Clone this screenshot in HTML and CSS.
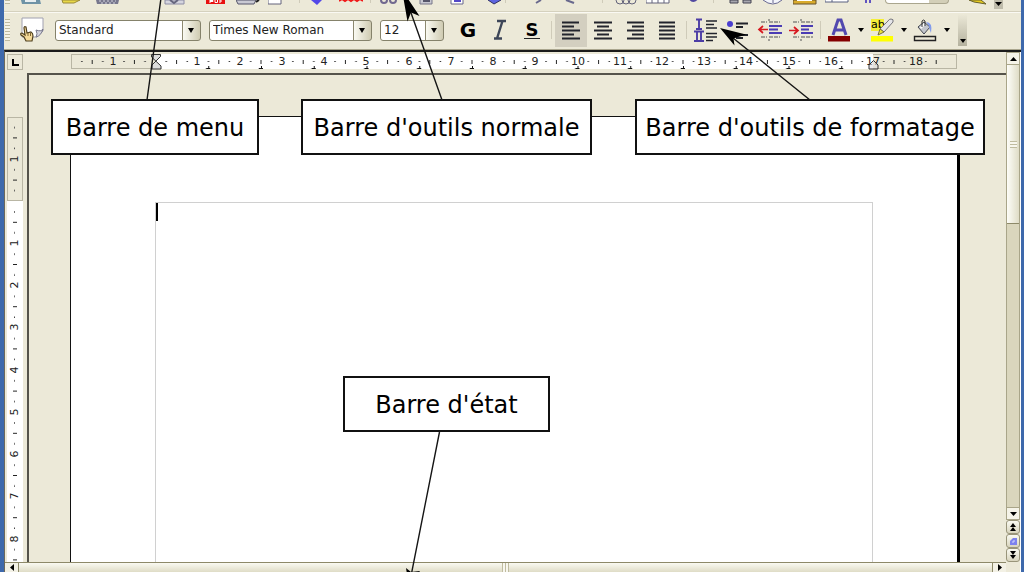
FILE: index.html
```
<!DOCTYPE html>
<html lang="fr">
<head>
<meta charset="utf-8">
<title>Traitement de texte</title>
<link rel="stylesheet" href="styles.css">
</head>
<body>
<div class="window">

  <div class="toolbar toolbar-standard" role="toolbar" aria-label="Barre d'outils normale">
    <span class="grip"></span>
    <button class="tool" aria-label="Nouveau"><svg width="24" height="5"><path d="M2 0H21L22 4H3Z" fill="#6f93a6"/><path d="M6 0h11v2H6z" fill="#e8eef0"/></svg></button>
    <span class="space-9"></span>
    <button class="tool" aria-label="Ouvrir"><svg width="24" height="5"><path d="M2 0H20L14 3H3Z" fill="#e8d848" stroke="#9a8a3a"/></svg></button>
    <span class="space-4"></span>
    <button class="tool" aria-label="Enregistrer"><svg width="24" height="5"><path d="M0 0H23L22 4H1Z" fill="#77778d"/><path d="M3 1h17M5 3h14" stroke="#d5d5df" stroke-dasharray="2 2"/></svg></button>
    <span class="space-36"></span>
    <button class="tool" aria-label="Modifier"><svg width="24" height="5"><path d="M1 0H20V4H1Z" fill="#d5d5df" stroke="#8c8ca4"/><path d="M6 0l4 3 4-3" fill="none" stroke="#66667e" stroke-width="2"/></svg></button>
    <span class="space-8"></span>
    <button class="tool" aria-label="Exporter en PDF"><svg width="24" height="5"><path d="M2 0H21V4H2Z" fill="#e81010"/><path d="M6 0v3M6 .5h3v1H6M11 0v2.500h2.500V0M16 0v3M16 1h2" fill="none" stroke="#fff"/></svg></button>
    <button class="tool" aria-label="Imprimer"><svg width="24" height="5"><path d="M0 0H20L18 4H2Z" fill="#c9c9d3" stroke="#55556a"/><path d="M20 2l3-2" stroke="#222" stroke-width="2"/></svg></button>
    <button class="tool" aria-label="Aperçu"><svg width="24" height="5"><path d="M0 -1H13V4H0Z" fill="#fff" stroke="#62627a"/></svg></button>
    <span class="separator"></span>
    <button class="tool" aria-label="Orthographe"><svg width="24" height="5"><path d="M4 0H15L10 5Z" fill="#5348e8"/></svg></button>
    <button class="tool" aria-label="Vérification automatique"><svg width="24" height="5"><path d="M0 1l3-2 3 2 3-2 3 2 3-2 3 2 3-2 3 2" fill="none" stroke="#f01818" stroke-width="2"/></svg></button>
    <span class="separator"></span>
    <button class="tool" aria-label="Couper"><svg width="24" height="5"><circle cx="6" cy="0" r="3" fill="none" stroke="#71688f" stroke-width="2"/><circle cx="15" cy="0" r="3" fill="none" stroke="#71688f" stroke-width="2"/></svg></button>
    <button class="tool" aria-label="Copier"><svg width="24" height="5"><path d="M10 -1H22V4H10Z" fill="#c8c8d2" stroke="#777789"/><path d="M13 1h7" stroke="#55556a" stroke-width="2"/></svg></button>
    <button class="tool" aria-label="Coller"><svg width="24" height="5"><path d="M9 -1H21V4H9Z" fill="#fff" stroke="#66668b"/><path d="M12 1h7" stroke="#5348c8" stroke-width="2"/></svg></button>
    <button class="tool" aria-label="Pinceau"><svg class="spill" width="24" height="5"><path d="M14 0l6 4 7-4" fill="#5d64e0" stroke="#303060"/></svg></button>
    <span class="separator"></span>
    <span class="space-13"></span>
    <button class="tool" aria-label="Annuler"><svg width="24" height="5"><path d="M15 0l-5 3" stroke="#68688d" stroke-width="2"/></svg></button>
    <button class="tool" aria-label="Rétablir"><svg width="24" height="5"><path d="M8 0l8 3" stroke="#68688d" stroke-width="2"/></svg></button>
    <span class="space-13"></span>
    <span class="separator"></span>
    <span class="space-4"></span>
    <button class="tool" aria-label="Hyperlien"><svg width="24" height="5"><g fill="none" stroke="#62627a"><circle cx="6" cy="0" r="4"/><circle cx="12" cy="0" r="4"/><circle cx="18" cy="0" r="4"/></g></svg></button>
    <button class="tool" aria-label="Tableau"><svg width="24" height="5"><path d="M0 -1H23V3H0ZM6 0v3M12 0v3M18 0v3" fill="#fff" stroke="#62627a"/></svg></button>
    <button class="tool" aria-label="Dessin"><svg width="24" height="5"><path d="M12 -1q3 4 7 0" fill="#fff" stroke="#5048a0" stroke-width="2"/></svg></button>
    <span class="space-4"></span>
    <span class="separator"></span>
    <span class="space-8"></span>
    <button class="tool" aria-label="Rechercher"><svg width="24" height="5"><path d="M1 0H9V3H1ZM14 0H22V3H14Z" fill="#a7a7af" stroke="#444452"/></svg></button>
    <button class="tool" aria-label="Navigateur"><svg width="24" height="5"><path d="M2 0Q12 8 21 0" fill="#f3f5fa" stroke="#686890"/><path d="M12 0v3" stroke="#686890"/></svg></button>
    <button class="tool" aria-label="Galerie"><svg width="24" height="5"><path d="M0 0H23V4H0Z" fill="#d9ab2c" stroke="#66522c"/><path d="M4 0h15v1H4z" fill="#fff"/></svg></button>
    <button class="tool" aria-label="Sources de données"><svg width="24" height="5"><path d="M0 -1H23V2H0ZM7 0v2" fill="#fff" stroke="#596080"/></svg></button>
    <button class="tool" aria-label="Caractères non imprimables"><svg width="24" height="5"><path d="M9 0v3M13 0v3" stroke="#6054c0" stroke-width="2"/></svg></button>
    <span class="zoom-field"></span>
    <span class="space-13"></span>
    <button class="tool" aria-label="Aide"><svg width="24" height="5"><path d="M3 0H15L20 4L8 2Z" fill="#e8cc20" stroke="#66602c"/></svg></button>
    <button class="overflow" aria-label="Plus d'outils"><svg width="7" height="4"><path d="M0 0H7L3.500 4Z"/></svg></button>
  </div>

  <div class="toolbar toolbar-format" role="toolbar" aria-label="Barre d'outils de formatage">
    <span class="grip"></span>
    <button class="style-button" aria-label="Styles et formatage"><svg width="26" height="26" viewBox="0 0 26 26"><path d="M3 1H24V14L18 20H3Z" fill="#fff" stroke="#a0a0b0"/><path d="M24 12Q22 15 17 13Q19 17 17 20Q22 19 24 12Z" fill="#d4d4dd" stroke="#77778b"/><path d="M5 11Q5 9 7 10L8 16L12 15Q14 16 14 19L13 24H7L5 20L2 18Q1 16 3 16L6 18Z" fill="#f4d998" stroke="#4f4020" stroke-width="1.200"/><path d="M9 16v3M11.500 16v3" stroke="#7e6430"/></svg></button>
    <label class="combo combo-style"><select aria-label="Style"><option>Standard</option></select><svg width="6" height="5"><path d="M0 0H6L3 5Z"/></svg></label>
    <label class="combo combo-font"><select aria-label="Police"><option>Times New Roman</option></select><svg width="6" height="5"><path d="M0 0H6L3 5Z"/></svg></label>
    <label class="combo combo-size"><select aria-label="Taille"><option>12</option></select><svg width="6" height="5"><path d="M0 0H6L3 5Z"/></svg></label>
    <button class="tool bold">G</button>
    <button class="tool italic" aria-label="Italique"><svg width="24" height="26" viewBox="0 0 24 26"><path d="M9 4H18M6 21.500H14M14.500 4L9 21.500" fill="none" stroke="#3d4658" stroke-width="2.400"/></svg></button>
    <button class="tool underline"><span>S</span></button>
    <span class="separator"></span>
    <button class="tool active" aria-label="Aligner à gauche"><svg width="24" height="26" viewBox="0 0 24 26"><path d="M3 5.500h17M3 9.500h12M3 13.500h18M3 17.500h12M3 21.500h18" stroke="#22242c" stroke-width="2"/></svg></button>
    <button class="tool" aria-label="Centrer"><svg width="24" height="26" viewBox="0 0 24 26"><path d="M3 5.500h18M6 9.500h12M3 13.500h18M6 17.500h12M3 21.500h18" stroke="#22242c" stroke-width="2"/></svg></button>
    <button class="tool" aria-label="Aligner à droite"><svg width="24" height="26" viewBox="0 0 24 26"><path d="M4 5.500h17M9 9.500h12M4 13.500h17M9 17.500h12M4 21.500h17" stroke="#22242c" stroke-width="2"/></svg></button>
    <button class="tool" aria-label="Justifier"><svg width="24" height="26" viewBox="0 0 24 26"><path d="M4 5.500h16M4 9.500h16M4 13.500h16M4 17.500h16M4 21.500h16" stroke="#22242c" stroke-width="2"/></svg></button>
    <span class="separator"></span>
    <button class="tool" aria-label="Numérotation"><svg width="24" height="26" viewBox="0 0 24 26"><path d="M2 2.500h6M5 2v10M2 12h6M0 14.500h10M3 14v10M7 14v10M0 24h10" stroke="#4c3da5" stroke-width="1.900"/><path d="M12 4h11M12 7.500h8M12 11h11M12 16.500h11M12 20h11M12 23.500h7" stroke="#22242c" stroke-width="1.700"/></svg></button>
    <button class="tool" aria-label="Puces"><svg width="24" height="26" viewBox="0 0 24 26"><circle cx="4" cy="7" r="3" fill="#4a3ed0"/><path d="M10 6.500h12M10 10h7M10 18h12M10 21h7" stroke="#22242c" stroke-width="1.800"/></svg></button>
    <button class="tool" aria-label="Diminuer le retrait"><svg width="26" height="26" viewBox="0 0 26 26"><path d="M4 5h6M12 5h11M4 20h6M12 20h11M12 2v2M12 22v2" stroke="#858580" stroke-dasharray="4 1" stroke-width="1.500"/><path d="M12 9h13M12 12.500h9M12 16h13" stroke="#4b3cb4" stroke-width="2"/><path d="M11 12.500H2M6 9L2 12.500L6 16" fill="none" stroke="#d71920" stroke-width="1.700"/></svg></button>
    <button class="tool" aria-label="Augmenter le retrait"><svg width="26" height="26" viewBox="0 0 26 26"><path d="M4 5h6M12 5h12M4 20h6M12 20h12M12 2v2M12 22v2" stroke="#858580" stroke-dasharray="4 1" stroke-width="1.500"/><path d="M12 9h12M12 12.500h8M12 16h12" stroke="#4b3cb4" stroke-width="2"/><path d="M0 13.500H9M5 10L9 13.500L5 17" fill="none" stroke="#d71920" stroke-width="1.700"/></svg></button>
    <span class="separator narrow"></span>
    <button class="tool" aria-label="Couleur de police"><svg width="24" height="26" viewBox="0 0 24 26"><path d="M6 18L11 3H14L19 18M8.500 13H16.500" fill="none" stroke="#5249af" stroke-width="3"/><path d="M1 19h22v5.500H1z" fill="#850000"/></svg></button>
    <button class="drop" aria-label="Choisir la couleur de police"><svg width="6" height="4"><path d="M0 0H6L3 4Z"/></svg></button>
    <button class="tool" aria-label="Surlignage"><svg width="24" height="26" viewBox="0 0 24 26"><path d="M1 2h13v12H1z" fill="#f4ee38"/><text x="1" y="11" class="icon-text">ab</text><path d="M21 2Q24 2 23 5L14 15L10 12L18 4Q19 2 21 2Z" fill="#e5e5e8" stroke="#77777d"/><path d="M10 12l4 3-6 3z" fill="#eee33a" stroke="#77733a"/><path d="M1 19h22v5.500H1z" fill="#ffff00"/></svg></button>
    <button class="drop" aria-label="Choisir le surlignage"><svg width="6" height="4"><path d="M0 0H6L3 4Z"/></svg></button>
    <button class="tool" aria-label="Arrière-plan"><svg width="24" height="26" viewBox="0 0 24 26"><path d="M5 10L11 5L17 10L11 17Z" fill="#c3c6cd" stroke="#444852"/><path d="M7 10L11 6L12 8L8 12Z" fill="#fff"/><path d="M9 10V4Q10.500 2 12 4V9" fill="none" stroke="#333"/><path d="M13 5Q20 5 18 16Q16 12 16 9Z" fill="#829cec"/><path d="M1.500 19.500h21v4h-21z" fill="#ece9d8" stroke="#222" stroke-width="1.400"/></svg></button>
    <button class="drop" aria-label="Choisir l'arrière-plan"><svg width="6" height="4"><path d="M0 0H6L3 4Z"/></svg></button>
    <button class="overflow tall" aria-label="Plus d'options"><svg width="6" height="4"><path d="M0 0H6L3 4Z"/></svg></button>
  </div>

  <div class="workspace">
    <div class="editor">
      <div class="ruler-row">
        <button class="tab-type" aria-label="Type de tabulation"><svg width="7" height="7"><path d="M1 0V6H7" fill="none" stroke="#000" stroke-width="2"/></svg></button>
        <svg class="ruler" height="18" aria-label="Règle horizontale">
          <defs><pattern id="marks" x="84.500" width="42.200" height="18" patternUnits="userSpaceOnUse"><path d="M10 8.500h1.500M31 8.500h1.500" stroke="#333"/><path d="M21.100 7v4" stroke="#222"/></pattern>
          <pattern id="tabs" x="84.500" width="52.750" height="18" patternUnits="userSpaceOnUse"><path d="M50.500 15.500h4.500M0 15.500h2M.5 13v3" stroke="#111"/></pattern></defs>
          <rect x=".5" y="1.500" width="885" height="14" fill="#ebe8d7" stroke="#b9b6a4"/>
          <rect x="85" y="1" width="717" height="15" fill="#fff"/>
          <rect x="8" width="866" height="18" fill="url(#marks)"/>
          <rect x="100" width="690" height="18" fill="url(#tabs)"/>
          <g class="ruler-text"><text x="42" y="12">1</text><text x="126" y="12">1</text><text x="169" y="12">2</text><text x="211" y="12">3</text><text x="253" y="12">4</text><text x="295" y="12">5</text><text x="338" y="12">6</text><text x="380" y="12">7</text><text x="422" y="12">8</text><text x="464" y="12">9</text><text x="507" y="12">10</text><text x="549" y="12">11</text><text x="591" y="12">12</text><text x="633" y="12">13</text><text x="675" y="12">14</text><text x="718" y="12">15</text><text x="760" y="12">16</text><text x="802" y="12">17</text><text x="845" y="12">18</text></g>
          <path d="M80.500 1.500h9v2L81 12v4h9v-3L80.500 4Z" fill="#ddd" stroke="#333"/>
          <path d="M798 16v-4l4.500-4.500L807 12v4Z" fill="#ddd" fill-opacity=".6" stroke="#333"/>
        </svg>
      </div>
      <div class="editor-body">
        <svg class="side-ruler" width="16" aria-label="Règle verticale">
          <defs><pattern id="side-marks" y="84.200" width="16" height="42.200" patternUnits="userSpaceOnUse"><path d="M7.500 10v1.500M7.500 31v1.500" stroke="#444"/><path d="M6 21.100h4" stroke="#222"/></pattern></defs>
          <rect width="16" height="84" fill="#ebe8d7"/><rect y="84" width="16" height="100%" fill="#fff"/>
          <rect x=".5" y=".5" width="15" height="83" fill="none" stroke="#b9b6a4"/>
          <rect y="6" width="16" height="100%" fill="url(#side-marks)"/>
          <g class="ruler-text"><text transform="translate(11 42) rotate(-90)">1</text><text transform="translate(11 126) rotate(-90)">1</text><text transform="translate(11 168) rotate(-90)">2</text><text transform="translate(11 210) rotate(-90)">3</text><text transform="translate(11 253) rotate(-90)">4</text><text transform="translate(11 295) rotate(-90)">5</text><text transform="translate(11 337) rotate(-90)">6</text><text transform="translate(11 379) rotate(-90)">7</text><text transform="translate(11 422) rotate(-90)">8</text></g>
        </svg>
        <main class="canvas">
          <div class="page"><div class="text-area"><span class="caret"></span></div></div>
        </main>
      </div>
      <div class="h-scroll">
        <button class="h-arrow" aria-label="Défiler à gauche"><svg width="4" height="7"><path d="M4 0V7L0 3.500Z"/></svg></button>
        <div class="h-thumb"><span class="h-grip"></span></div>
        <button class="h-arrow" aria-label="Défiler à droite"><svg width="4" height="7"><path d="M0 0V7L4 3.500Z"/></svg></button>
      </div>
    </div>
    <div class="v-scroll">
      <button class="v-arrow" aria-label="Défiler vers le haut"><svg width="7" height="4"><path d="M0 4H7L3.500 0Z"/></svg></button>
      <div class="v-track"><div class="v-thumb"><span class="v-grip"></span></div></div>
      <button class="v-arrow" aria-label="Défiler vers le bas"><svg width="7" height="4"><path d="M0 0H7L3.500 4Z"/></svg></button>
      <button class="v-nav" aria-label="Page précédente"><svg width="6" height="8"><path d="M0 4H6L3 0ZM0 8H6L3 4Z"/></svg></button>
      <button class="v-nav" aria-label="Navigation"><svg width="7" height="7"><path d="M0 7V3L3 0H7V7Z" fill="#7d82ee"/><path d="M3 5V3H5" fill="none" stroke="#d5d8ff"/></svg></button>
      <button class="v-nav" aria-label="Page suivante"><svg width="6" height="8"><path d="M0 0H6L3 4ZM0 4H6L3 8Z"/></svg></button>
    </div>
  </div>

  <div class="callout callout-menu">Barre de menu</div>
  <div class="callout callout-standard">Barre d'outils normale</div>
  <div class="callout callout-format">Barre d'outils de formatage</div>
  <div class="callout callout-status">Barre d'état</div>
  <svg class="arrows" aria-hidden="true">
    <path d="M161 -2L147 100M410 10L442 100M733 38L810 100M439.500 432L411 576" fill="none" stroke="#151515" stroke-width="1.400"/>
    <path d="M402 -10L407.500 21.500L411 12.500L419.500 16ZM720 28L734.500 45.500L733.500 38.500L746 34.500ZM406 568L411 572L420 571L409 586Z"/>
  </svg>
</div>
</body>
</html>
```

FILE: styles.css
```
* { box-sizing: border-box; }

body {
  margin: 0;
  font-family: "DejaVu Sans", sans-serif;
  color: #111;
}

button {
  display: flex;
  align-items: center;
  justify-content: center;
  flex: none;
  margin: 0;
  padding: 0;
  border: 0;
  background: none;
  color: #000;
  font: inherit;
}

svg { display: block; flex: none; }
.spill { overflow: visible; }

.window {
  position: relative;
  display: flex;
  flex-direction: column;
  height: 100vh;
  overflow: hidden;
  background: #ece9d8;
  border-left: 4px solid #3e69ac;
  border-right: 3px solid #3e69ac;
}

.toolbar { display: flex; flex: none; align-items: center; }

.toolbar-standard {
  height: 12px;
  align-items: flex-start;
  border-bottom: 1px solid #d5d1be;
}

.toolbar-format {
  height: 38px;
  padding-bottom: 2px;
  border-top: 1px solid #faf9f3;
  border-bottom: 1px solid #aaa68e;
}

.grip {
  width: 5px;
  height: 22px;
  margin: 0 5px 0 1px;
  background: repeating-linear-gradient(#bdb99f 0 1px, #f5f3e8 1px 3px);
}

.toolbar-standard .grip { height: 4px; }

.tool { width: 32px; height: 33px; }
.toolbar-standard .tool { height: 5px; }
.tool.active { background: #d3cfc0; }

.space-4 { flex: none; width: 4px; }
.space-8 { flex: none; width: 8px; }
.space-9 { flex: none; width: 9px; }
.space-13 { flex: none; width: 13px; }
.space-36 { flex: none; width: 36px; }

.separator {
  flex: none;
  width: 1px;
  height: 18px;
  margin: 0 3px;
  background: #cfcbb9;
}

.toolbar-standard .separator { height: 3px; }
.separator.narrow { margin: 0 2px; }

.zoom-field {
  width: 64px;
  height: 4px;
  border: 1px solid #aaa68e;
  border-top: 0;
  border-radius: 0 0 4px 4px;
  background: linear-gradient(90deg, #fff 70%, #d3cfb8 70%);
}

.style-button { width: 26px; height: 26px; margin-right: 10px; margin-left: 4px; }

.combo {
  position: relative;
  display: flex;
  align-items: center;
  flex: none;
  height: 21px;
  margin-right: 8px;
}

.combo select {
  appearance: none;
  width: 100%;
  height: 100%;
  padding: 0 20px 0 3px;
  border: 1px solid #85826b;
  border-radius: 3px;
  background: linear-gradient(90deg, #8d8970 1px, #fafaf2 1px, #cfcbb2) right / 18px 100% no-repeat #fff;
  color: #222;
  font: 12px "DejaVu Sans", sans-serif;
}

.combo svg { position: absolute; right: 7px; pointer-events: none; }
.combo-style { width: 146px; }
.combo-font { width: 163px; }
.combo-size { width: 64px; }

.bold { font-size: 20px; font-weight: bold; }
.underline { font-size: 18px; font-weight: bold; line-height: 17px; }
.underline span { width: 16px; border-bottom: 1px solid #222; }
.icon-text { font: 11px "DejaVu Sans", sans-serif; }

.drop { width: 11px; height: 33px; }

.overflow {
  align-items: flex-end;
  width: 9px;
  height: 9px;
  padding-bottom: 3px;
  background: #bfbcab;
}

.overflow.tall {
  height: 32px;
  margin-left: 6px;
  background: linear-gradient(#ece9d8, #b5b29f);
}

.workspace {
  display: flex;
  flex: 1;
  min-height: 0;
  border-top: 2px solid #1b1b1b;
  border-left: 1px solid #6c695c;
}

.editor { display: flex; flex: 1; flex-direction: column; min-width: 0; }

.ruler-row { display: flex; flex: none; gap: 48px; height: 21px; padding: 1px 0 0 2px; }

.tab-type {
  width: 16px;
  height: 16px;
  margin-top: 1px;
  border: 1px solid #b9b6a4;
}

.ruler { flex: 1; min-width: 0; }
.ruler-text { fill: #222; font: 11px "DejaVu Sans", sans-serif; text-anchor: middle; }

.editor-body { display: flex; flex: 1; gap: 4px; min-height: 0; padding-left: 2px; }
.side-ruler { height: auto; margin-top: 44px; }

.canvas {
  display: flex;
  flex: 1;
  min-width: 0;
  padding: 41px 46px 0 41px;
  border-top: 2px solid #55534b;
  border-left: 2px solid #55534b;
}

.page {
  display: flex;
  flex: 1;
  padding: 85px 84px 0;
  border: 1px solid #111;
  border-right: 3px solid #000;
  border-bottom: 0;
  background: #fff;
}

.text-area { flex: 1; border: 1px solid #d0d0d0; border-bottom: 0; }
.caret { display: block; width: 2px; height: 18px; background: #000; }

.h-scroll { display: flex; flex: none; height: 10px; overflow: hidden; border-top: 1px solid #8d8969; }
.h-arrow { width: 13px; background: #f3f1e5; }
.h-thumb {
  display: flex;
  flex: 1;
  justify-content: center;
  border-right: 1px solid #8d8969;
  border-left: 1px solid #8d8969;
  background: linear-gradient(#fafaf2, #dfdcc6);
}
.h-grip { width: 7px; background: repeating-linear-gradient(90deg, #c0bca0 0 1px, #f8f7ef 1px 3px); }

.v-scroll {
  display: flex;
  flex: none;
  flex-direction: column;
  width: 15px;
  padding-bottom: 10px;
  border-right: 1px solid #fff;
}

.v-arrow { height: 13px; border: 1px solid #a9a589; background: #f5f3e8; }
.v-track { flex: 1; border: 1px solid #a9a589; border-width: 0 1px; background: #dad6bd; }
.v-thumb {
  display: flex;
  align-items: center;
  justify-content: center;
  height: 36%;
  border-bottom: 1px solid #8d8969;
  background: linear-gradient(90deg, #fdfdf8, #dfdcc6);
}
.v-grip { width: 7px; height: 7px; background: repeating-linear-gradient(#c0bca0 0 1px, #f8f7ef 1px 3px); }
.v-nav { height: 14px; border: 1px solid #99957a; border-radius: 3px; background: linear-gradient(#fafaf2, #d8d4bd); }

.callout {
  position: absolute;
  display: flex;
  align-items: center;
  justify-content: center;
  height: 56px;
  padding-top: 2px;
  border: 2px solid #111;
  background: #fff;
  color: #000;
  font-size: 24px;
  line-height: 28px;
  white-space: nowrap;
}

.callout-menu { top: 99px; left: 47px; width: 208px; }
.callout-standard { top: 99px; left: 297px; width: 291px; }
.callout-format { top: 99px; left: 631px; width: 350px; }
.callout-status { top: 376px; left: 339px; width: 207px; }

.arrows { position: absolute; top: 0; left: -4px; width: 1024px; height: 100%; pointer-events: none; }
```
